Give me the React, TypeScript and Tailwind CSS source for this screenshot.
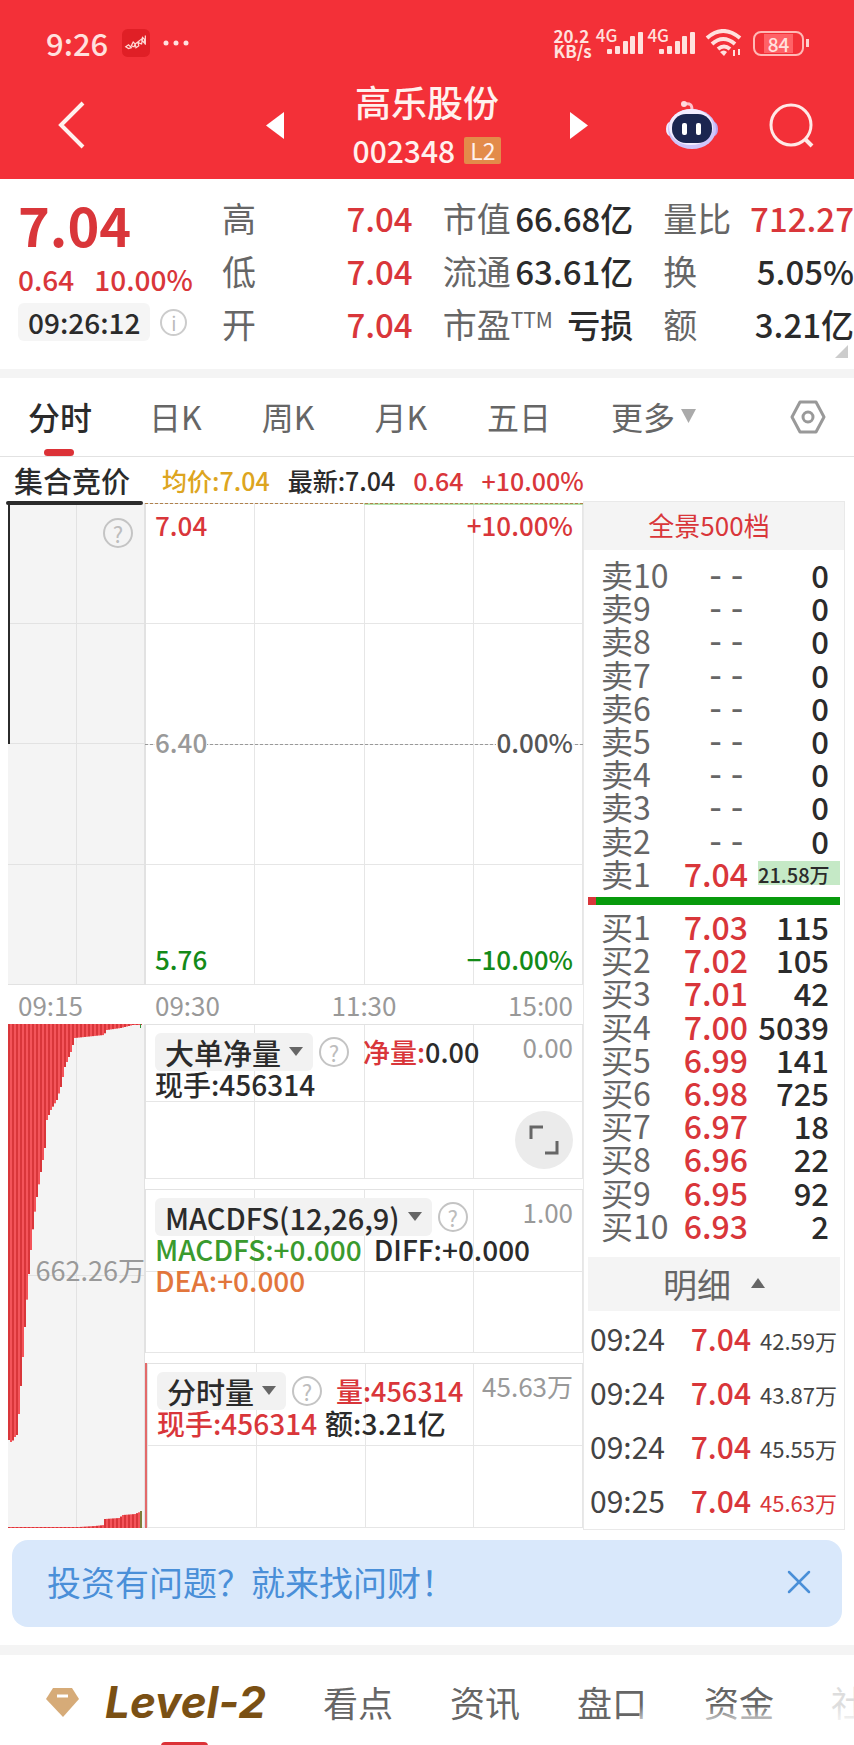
import { X } from 'lucide-react';
import type { ReactNode } from 'react';

type Level = { label: string; price: string; volume: string };

const sells: Level[] = [
    ...[10, 9, 8, 7, 6, 5, 4, 3, 2].map((n) => ({ label: `卖${n}`, price: '--', volume: '0' })),
    { label: '卖1', price: '7.04', volume: '21.58万' },
];

const buys: Level[] = [
    { label: '买1', price: '7.03', volume: '115' },
    { label: '买2', price: '7.02', volume: '105' },
    { label: '买3', price: '7.01', volume: '42' },
    { label: '买4', price: '7.00', volume: '5039' },
    { label: '买5', price: '6.99', volume: '141' },
    { label: '买6', price: '6.98', volume: '725' },
    { label: '买7', price: '6.97', volume: '18' },
    { label: '买8', price: '6.96', volume: '22' },
    { label: '买9', price: '6.95', volume: '92' },
    { label: '买10', price: '6.93', volume: '2' },
];

const trades = [
    { time: '09:24', price: '7.04', volume: '42.59万', up: false },
    { time: '09:24', price: '7.04', volume: '43.87万', up: false },
    { time: '09:24', price: '7.04', volume: '45.55万', up: false },
    { time: '09:25', price: '7.04', volume: '45.63万', up: true },
];

// [x, bar length] samples of the auction's unmatched volume
const unmatched: [number, number][] = [
    [0, 416], [3, 419], [5, 414], [8, 411], [10, 390], [12, 362], [14, 333], [16, 303], [19, 262],
    [22, 226], [25, 195], [28, 173], [31, 154], [34, 136], [37, 118], [38, 96], [42, 86], [48, 76],
    [52, 63], [56, 43], [62, 28], [66, 14], [95, 11], [98, 6], [112, 4], [124, 1], [133, 1],
];

// [x, bar length] samples of the auction's matched volume
const matched: [number, number][] = [
    [0, 1], [70, 1], [86, 2], [95, 3], [96, 9], [110, 10], [114, 13], [126, 14], [133, 17],
];

const sample = (points: [number, number][], x: number) => {
    const i = Math.max(1, points.findIndex((p) => p[0] >= x));
    const [x0, y0] = points[i - 1];
    const [x1, y1] = points[i];
    return y0 + ((y1 - y0) * (x - x0)) / (x1 - x0);
};

const barXs = Array.from({ length: 66 }, (_, i) => i * 2);

const HelpButton = ({ label }: { label: string }) => (
    <button aria-label={label} className="flex h-[30px] w-[30px] shrink-0 items-center justify-center rounded-full border-2 border-[#c4c4c4] text-[22px] leading-none text-[#bdbdbd]">
        ?
    </button>
);

const GridLines = ({ rows }: { rows: 2 | 4 }) => (
    <div className={`absolute inset-0 grid grid-cols-4 border-t border-l border-[#e2e2e2] ${rows === 4 ? 'grid-rows-4' : 'grid-rows-2'}`}>
        {Array.from({ length: rows * 4 }, (_, i) => (
            <div key={i} className="border-r border-b border-[#e6e6e6]" />
        ))}
    </div>
);

const IndicatorPicker = ({ name }: { name: string }) => (
    <button className="flex h-[38px] items-center gap-2 rounded-md bg-[#f2f2f2] px-[10px] text-[29px] leading-none font-medium text-[#2b2b2b]">
        {name}
        <svg width="14" height="10" viewBox="0 0 14 10" fill="#666"><path d="M0 0h14L7 9z" /></svg>
    </button>
);

const Indicator = ({ name, max, lead, children, className }: { name: string; max: string; lead?: ReactNode; children: ReactNode; className: string }) => (
    <div className={`relative ${className}`}>
        <GridLines rows={2} />
        <div className="relative px-[10px] pt-[11px]">
            <div className="flex h-[34px] items-center gap-[6px]">
                <IndicatorPicker name={name} />
                <HelpButton label={`${name}说明`} />
                <span className="ml-2 text-[27px] leading-[34px] font-medium whitespace-nowrap text-[#2b2b2b]">{lead}</span>
                <span className="ml-auto self-start text-[26px] leading-6 text-[#999]">{max}</span>
            </div>
            <div className="text-[28px] leading-[31px] font-medium text-[#2b2b2b]">{children}</div>
        </div>
    </div>
);

const Stat = ({ label, value, red }: { label: ReactNode; value: string; red?: boolean }) => (
    <div className="flex items-center justify-between whitespace-nowrap">
        <dt className="text-[34px] leading-[52px] text-[#666]">{label}</dt>
        <dd className={`text-[33px] leading-[52px] font-medium ${red ? 'text-[#d9363a]' : 'text-[#2b2b2b]'}`}>{value}</dd>
    </div>
);

const LevelTable = ({ levels }: { levels: Level[] }) => (
    <table className="h-[332px] w-full table-fixed text-right">
        <tbody>
            {levels.map(({ label, price, volume }) => (
                <tr key={label} className="whitespace-nowrap">
                    <th className="w-[82px] pl-[13px] text-left text-[32px] leading-[33px] font-normal text-[#666]">{label}</th>
                    {price === '--' ? (
                        <td className="w-[78px] font-['DejaVu_Sans_Mono',monospace] text-[36px] leading-[33px] text-[#666]">--</td>
                    ) : (
                        <td className="w-[78px] text-[32px] leading-[33px] font-medium text-[#d9363a]">{price}</td>
                    )}
                    <td className="pl-[10px] leading-[33px] text-[#2b2b2b]">
                        <span className={`block pr-[11px] font-medium ${volume.includes('万') ? 'h-6 bg-[#c5e9c6] text-[20px] leading-7' : 'text-[31px]'}`}>{volume}</span>
                    </td>
                </tr>
            ))}
        </tbody>
    </table>
);

const Signal = () => (
    <div className="flex items-end">
        <span className="-mr-[10px] -mt-1 self-start text-[17px] leading-4 font-medium">4G</span>
        <svg width="36" height="24" viewBox="0 0 36 24" fill="#ffe1de">
            <rect x="0" y="18" width="5" height="5" rx="1" />
            <rect x="8" y="15" width="5" height="8" rx="1" />
            <rect x="16" y="10" width="5" height="13" rx="1" />
            <rect x="23" y="5" width="5" height="18" rx="1" />
            <rect x="31" y="1" width="5" height="22" rx="1" />
        </svg>
    </div>
);

const Robot = () => (
    <svg width="54" height="50" viewBox="0 0 54 50">
        <path d="M19 4c7-1 8 1 8 6" fill="none" stroke="#ffc2cc" strokeWidth="3" strokeLinecap="round" />
        <circle cx="19" cy="4" r="3" fill="#ffd9de" />
        <ellipse cx="5" cy="29" rx="4" ry="7" fill="#f2eaff" />
        <ellipse cx="49" cy="29" rx="4" ry="7" fill="#b9a5f0" />
        <ellipse cx="27" cy="29" rx="24" ry="20" fill="#cfc5fa" />
        <ellipse cx="26" cy="27" rx="22" ry="18" fill="#f3edff" />
        <rect x="7" y="14" width="40" height="29" rx="14" fill="#1b2550" />
        <rect x="17" y="23" width="5" height="12" rx="2" fill="#fff" />
        <rect x="31" y="23" width="5" height="12" rx="2" fill="#fff" />
    </svg>
);

const Header = () => (
    <header className="h-[179px] bg-[#f33038] text-[#fff1ee]">
        <div className="flex h-[86px] items-center pr-[45px] pl-[46px] text-[#ffe1de]">
            <span className="text-[31px] leading-10 font-medium">9:26</span>
            <svg className="ml-[14px]" width="28" height="28" viewBox="0 0 30 30">
                <rect width="30" height="30" rx="6" fill="#e01f26" />
                <path d="M4 19l3-2 3 3-3 1zM10 18l2-4 2 2-1 3zM14 16l3-2 1 4-3 2zM18 13l4-3-1 6-3-1zM22 9l2 2v4l-3-3zM25 7v10" fill="none" stroke="#ffd9d5" strokeWidth="1.3" />
            </svg>
            <svg className="ml-[13px]" width="26" height="6" viewBox="0 0 26 6" fill="#ffe1de">
                <circle cx="3" cy="3" r="2.5" /><circle cx="13" cy="3" r="2.5" /><circle cx="23" cy="3" r="2.5" />
            </svg>
            <div className="ml-auto flex items-center">
                <div className="mr-1 text-[17px] leading-[15px] font-bold">20.2<br />KB/s</div>
                <Signal />
                <div className="ml-[4px]"><Signal /></div>
                <svg className="ml-[10px]" width="38" height="28" viewBox="0 0 38 28" fill="none" stroke="#ffe1de" strokeWidth="4">
                    <path d="M2 9q16-14 33 0M7 15q11-10 23 0M13 20q6-5 12 0" />
                    <path d="M15 23q4-3 7 0l-3 4z" fill="#ffe1de" stroke="none" />
                    <path d="M29 21v6M34 26v-6" strokeWidth="2" />
                </svg>
                <div className="ml-[10px] flex h-[25px] w-[51px] items-center justify-center rounded-lg border-2 border-[#ffb9b6] text-[19px] font-medium">
                    <span className="bg-[#ff6267] px-1 leading-[19px]">84</span>
                </div>
                <div className="ml-[2px] h-2 w-[3px] bg-[#ffd0cd]" />
            </div>
        </div>
        <div className="grid grid-cols-[1fr_auto_1fr] items-center">
            <div className="flex items-center justify-between pr-[69px] pl-[58px]">
                <button aria-label="返回"><svg width="28" height="48" viewBox="0 0 28 48" fill="none" stroke="#fff1ee" strokeWidth="4"><path d="M25 2L3 24l22 22" /></svg></button>
                <button aria-label="上一只"><svg width="18" height="27" viewBox="0 0 18 27" fill="#fff"><path d="M18 0v27L0 13.500z" /></svg></button>
            </div>
            <div className="text-center">
                <h1 className="text-[36px] leading-[30px] font-medium">高乐股份</h1>
                <div className="mt-[20px] flex items-center justify-center gap-[9px]">
                    <span className="text-[30px] leading-7 font-medium">002348</span>
                    <span className="rounded-xs bg-[#e38b4a] px-[6px] text-[23px] leading-[27px]">L2</span>
                </div>
            </div>
            <div className="flex items-center pr-[40px] pl-[69px]">
                <button aria-label="下一只"><svg width="18" height="27" viewBox="0 0 18 27" fill="#fff"><path d="M0 0v27l18-13.500z" /></svg></button>
                <button aria-label="智能助手" className="ml-auto"><Robot /></button>
                <button aria-label="搜索" className="ml-[50px]">
                    <svg width="45" height="45" viewBox="0 0 45 45" fill="none" stroke="#ffe9e6" strokeWidth="3"><circle cx="22" cy="22" r="20" /><path d="M36 36l7 7" strokeWidth="4" /></svg>
                </button>
            </div>
        </div>
    </header>
);

const Quote = () => (
    <section className="relative flex h-[190px] pt-[13px]">
        <div className="w-[222px] pl-[18px] text-[#d9363a]">
            <div className="pt-1 text-[54px] leading-[56px] font-bold">7.04</div>
            <div className="flex gap-5 pt-3 text-[28px] leading-[30px] font-medium"><span>0.64</span><span>10.00%</span></div>
            <div className="mt-[9px] flex items-center gap-[10px]">
                <span className="rounded-md bg-[#f5f5f5] px-[10px] text-[28px] leading-[38px] font-medium text-[#2b2b2b]">09:26:12</span>
                <button aria-label="说明" className="flex h-[27px] w-[27px] items-center justify-center rounded-full border-2 border-[#ccc] text-[19px] leading-none text-[#bbb]">i</button>
            </div>
        </div>
        <dl className="grid flex-1 grid-cols-3 content-start gap-x-[30px] gap-y-px">
            <Stat label="高" value="7.04" red />
            <Stat label="市值" value="66.68亿" />
            <Stat label="量比" value="712.27" red />
            <Stat label="低" value="7.04" red />
            <Stat label="流通" value="63.61亿" />
            <Stat label="换" value="5.05%" />
            <Stat label="开" value="7.04" red />
            <Stat label={<>市盈<sup className="text-[21px]">TTM</sup></>} value="亏损" />
            <Stat label="额" value="3.21亿" />
        </dl>
        <svg className="absolute right-[6px] bottom-[11px]" width="13" height="13" viewBox="0 0 13 13" fill="#ccc"><path d="M13 0v13H0z" /></svg>
    </section>
);

const periods = ['日K', '周K', '月K', '五日'];

const PeriodTabs = () => (
    <nav className="flex h-[79px] items-center border-b border-[#e2e2e2] pr-[28px] pl-[28px] text-[32px] text-[#666]">
        <button className="relative flex h-full items-center pb-[3px] font-medium text-[#2b2b2b]">
            分时
            <span className="absolute bottom-0 left-4 h-[7px] w-[30px] rounded-full bg-[#dc3237]" />
        </button>
        <div className="ml-[57px] flex gap-[60px] pb-[3px]">
            {periods.map((p) => <button key={p}>{p}</button>)}
            <button className="flex items-center gap-[6px]">
                更多
                <svg width="15" height="14" viewBox="0 0 15 14" fill="#aaa"><path d="M0 0h15L7.500 14z" /></svg>
            </button>
        </div>
        <button aria-label="设置" className="ml-auto">
            <svg width="36" height="34" viewBox="0 0 36 34" fill="none" stroke="#999" strokeWidth="3" strokeLinejoin="round"><path d="M10 2h16l8 15-8 15H10L2 17z" /><circle cx="18" cy="17" r="5" /></svg>
        </button>
    </nav>
);

const AuctionColumn = () => (
    <div className="w-[137px] shrink-0">
        <h2 className="pl-[6px] text-[29px] leading-[46px] font-medium whitespace-nowrap text-[#2b2b2b]">集合竞价</h2>
        <div className="relative h-[482px] bg-[#f4f4f4]">
            <div className="grid h-full grid-cols-2 grid-rows-4">
                {Array.from({ length: 8 }, (_, i) => <div key={i} className="border-r border-b border-[#e2e2e2]" />)}
            </div>
            <div className="absolute top-0 left-0 h-1/2 w-[2px] bg-[#2b2b2b]" />
            <div className="absolute -top-[2px] -left-[2px] h-1 w-full rounded-full bg-[#2b2b2b]" />
            <div className="absolute top-[15px] right-[12px]"><HelpButton label="集合竞价说明" /></div>
        </div>
        <div className="pl-[10px] text-[26px] leading-[39px] text-[#999]">09:15</div>
        <div className="relative h-[504px] bg-[#f4f4f4]">
            <div className="grid h-full grid-cols-2 grid-rows-2">
                {Array.from({ length: 4 }, (_, i) => <div key={i} className="border-r border-b border-[#e2e2e2]" />)}
            </div>
            <svg className="absolute inset-0 h-full w-full" viewBox="0 0 137 504" preserveAspectRatio="none">
                <rect width="134" height="1" fill="#d9363a" />
                {barXs.map((x) => (
                    <g key={x}>
                        <rect x={x} width="2" height={sample(unmatched, x)} fill={x % 4 ? '#f4545a' : '#d9363a'} />
                        <rect x={x} y={504 - sample(matched, x)} width="2" height={sample(matched, x)} fill={x % 4 ? '#f4545a' : '#d9363a'} />
                    </g>
                ))}
                <rect x="132" y="0" width="1" height="4" fill="#3a8f3a" />
                <rect x="132" y="487" width="2" height="17" fill="#7d7d3a" />
            </svg>
            <span className="absolute top-[230px] right-0 text-[27px] leading-8 text-[#999]">662.26万</span>
        </div>
    </div>
);

const MinuteColumn = () => (
    <div className="min-w-0 flex-1">
        <div className="flex gap-[18px] pl-[17px] text-[25px] leading-[46px] font-medium whitespace-nowrap">
            <span className="text-[#dda520]">均价:7.04</span>
            <span className="text-[#2b2b2b]">最新:7.04</span>
            <span className="text-[#d9363a]">0.64</span>
            <span className="text-[#d9363a]">+10.00%</span>
        </div>
        <div className="relative h-[482px]">
            <GridLines rows={4} />
            <div className="absolute top-0 right-0 left-1/2 h-[2px] bg-[#b4e0a8]" />
            <div className="absolute inset-x-0 top-0 border-t border-dashed border-[#b0814c]" />
            <div className="absolute inset-x-0 top-1/2 border-t border-dashed border-[#999]" />
            <div className="relative flex h-full flex-col justify-between px-[10px] pt-[6px] pb-[10px] text-[26px] leading-[32px] font-medium">
                <div className="flex justify-between text-[#d9363a]"><span>7.04</span><span>+10.00%</span></div>
                <div className="flex justify-between"><span className="bg-white text-[#999]">6.40</span><span className="bg-white text-[#555]">0.00%</span></div>
                <div className="flex justify-between text-[#138a18]"><span>5.76</span><span>−10.00%</span></div>
            </div>
        </div>
        <div className="flex justify-between px-[10px] text-[26px] leading-[39px] text-[#999]">
            <span>09:30</span><span>11:30</span><span>15:00</span>
        </div>
        <div className="relative">
            <Indicator name="大单净量" max="0.00" className="h-[155px]" lead={<><b className="font-medium text-[#d9363a]">净量:</b>0.00</>}>
                现手:456314
            </Indicator>
            <button aria-label="全屏" className="absolute right-[10px] bottom-[10px] flex h-[58px] w-[58px] items-center justify-center rounded-full bg-[#ebebeb]">
                <svg width="30" height="30" viewBox="0 0 30 30" fill="none" stroke="#666" strokeWidth="3"><path d="M2 14V2h12M28 16v12H16" /></svg>
            </button>
        </div>
        <Indicator name="MACDFS(12,26,9)" max="1.00" className="mt-[10px] h-[164px]">
            <div className="flex gap-3"><span className="text-[#3a9a2e]">MACDFS:+0.000</span><span>DIFF:+0.000</span></div>
            <div className="text-[#e2763c]">DEA:+0.000</div>
        </Indicator>
        <div className="mt-[10px] h-[165px] border-l-2 border-[#e36a6a]">
            <Indicator name="分时量" max="45.63万" className="h-full" lead={<b className="font-medium text-[#d9363a]">量:456314</b>}>
                <div className="flex gap-2"><span className="text-[#d9363a]">现手:456314</span><span>额:3.21亿</span></div>
            </Indicator>
        </div>
    </div>
);

const OrderBook = () => (
    <aside className="mt-[44px] w-[262px] shrink-0 self-start border border-[#e9e9e9] pb-[2px]">
        <a href="#depth" className="mb-2 block bg-[#f4f4f4] pr-[10px] pb-[2px] text-center text-[26px] leading-[46px] text-[#d9363a]">全景500档</a>
        <div className="px-1">
            <LevelTable levels={sells} />
            <div className="mt-[7px] mb-[5px] flex h-2 bg-[#079a0c]"><div className="w-2 bg-[#d9363a]" /></div>
            <LevelTable levels={buys} />
            <button className="mt-[15px] flex h-[54px] w-full items-center justify-center gap-5 bg-[#f4f4f4] pb-[2px] text-[34px] text-[#666]">
                明细
                <svg width="14" height="10" viewBox="0 0 14 10" fill="#666"><path d="M7 0l7 10H0z" /></svg>
            </button>
            <table className="w-full table-fixed text-right whitespace-nowrap">
                <tbody>
                    {trades.map(({ time, price, volume, up }, i) => (
                        <tr key={i} className="h-[54px]">
                            <td className="w-[82px] pl-[2px] text-left text-[30px] text-[#444]">{time}</td>
                            <td className="w-[81px] text-[30px] font-medium text-[#d9363a]">{price}</td>
                            <td className={`pt-1 pr-[3px] text-[22px] ${up ? 'text-[#d9363a]' : 'text-[#444]'}`}>{volume}</td>
                        </tr>
                    ))}
                </tbody>
            </table>
        </div>
    </aside>
);

const BottomTabs = () => (
    <nav className="relative flex h-[90px] items-center gap-[57px] overflow-hidden pl-[46px] text-[35px] whitespace-nowrap text-[#666]">
        <button className="relative flex h-full items-center pt-1 text-[#7a5014]">
            <svg width="33" height="29" viewBox="0 0 33 29"><path d="M7 0h19l7 11-16 18L0 11z" fill="#d6ab78" /><path d="M11 8h11" stroke="#fff" strokeWidth="3" /></svg>
            <span className="ml-[26px] font-['Inter',sans-serif] text-[44px] leading-none font-bold italic">Level-2</span>
            <span className="absolute -bottom-[7px] left-[115px] h-[10px] w-[47px] rounded bg-[#dc3237]" />
        </button>
        <button className="pt-1">看点</button>
        <button className="pt-1">资讯</button>
        <button className="pt-1">盘口</button>
        <button className="pt-1">资金</button>
        <button className="pt-1 text-[#ddd]">社</button>
        <div className="absolute right-0 bottom-0 h-10 w-[215px] bg-linear-to-t from-white via-white/80 to-transparent" />
    </nav>
);

export default function App() {
    return (
        <main className="overflow-hidden bg-white font-['Noto_Sans_CJK_SC',sans-serif]">
            <Header />
            <Quote />
            <div className="h-[9px] bg-[#f4f4f4]" />
            <PeriodTabs />
            <section className="flex pr-[9px] pl-2">
                <AuctionColumn />
                <MinuteColumn />
                <OrderBook />
            </section>
            <aside className="mx-3 mt-[10px] flex h-[87px] items-center justify-between rounded-2xl bg-[#d9e8fb] pr-[23px] pl-[35px] pb-1 text-[34px] text-[#4a8fd8]">
                <span>投资有问题？就来找问财！</span>
                <button aria-label="关闭"><X size={40} strokeWidth={1.5} /></button>
            </aside>
            <div className="mt-[18px] h-[10px] bg-[#f4f4f4]" />
            <BottomTabs />
        </main>
    );
}
